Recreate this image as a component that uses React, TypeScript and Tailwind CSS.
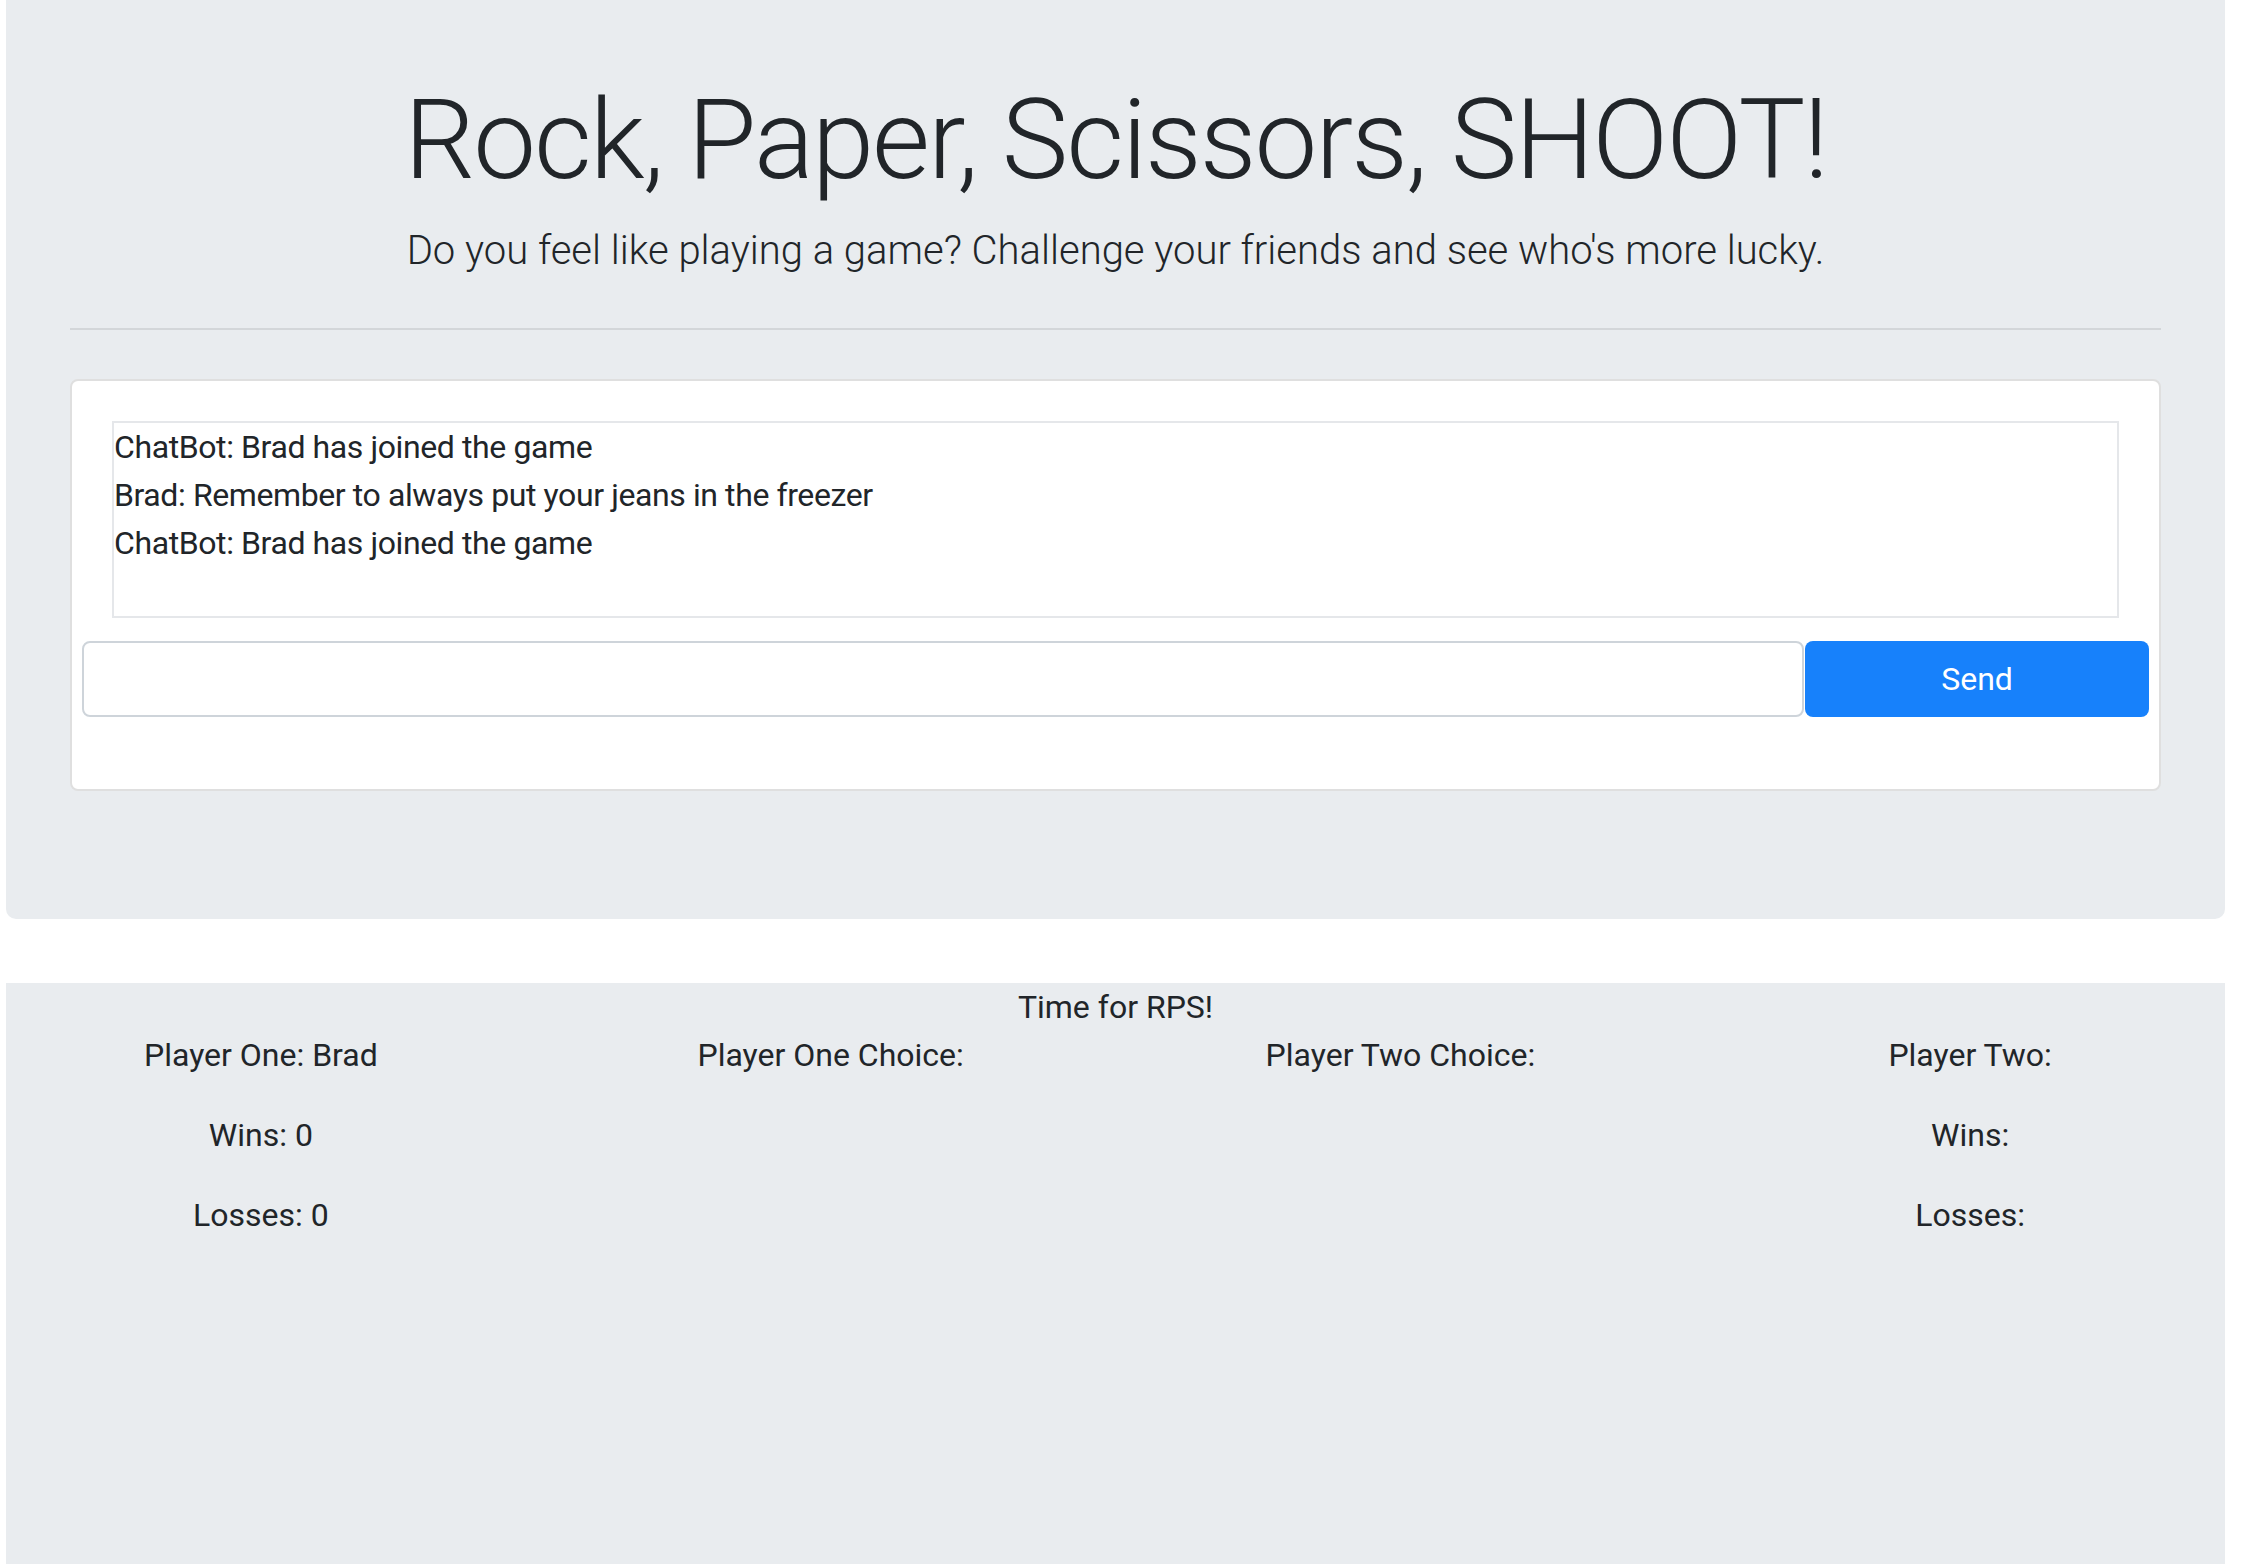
import { useState } from "react";

const messages = [
  "ChatBot: Brad has joined the game",
  "Brad: Remember to always put your jeans in the freezer",
  "ChatBot: Brad has joined the game",
];

function Column({ lines }: { lines: string[] }) {
  return (
    <div className="flex flex-col items-center">
      {lines.map((line, i) => (
        <p key={i} className="mb-[32px] leading-[48px]">
          {line}
        </p>
      ))}
    </div>
  );
}

export default function App() {
  const [text, setText] = useState("");

  return (
    <div className="flex flex-col h-screen overflow-hidden bg-white font-['Roboto',sans-serif] text-[32px] text-[#212529]">
      <div className="ml-[6px] w-[2219px] shrink-0 bg-[#e9ecef] rounded-b-[10px] px-[64px] pt-[73px] pb-[128px] mb-[64px]">
        <h1 className="text-center text-[112px] font-light leading-[1.2] tracking-[-2px] mb-[14px]">
          Rock, Paper, Scissors, SHOOT!
        </h1>
        <p className="text-center text-[40px] font-light leading-[1.5]">
          Do you feel like playing a game? Challenge your friends and see who's more lucky.
        </p>
        <hr className="mt-[47px] mb-[49px] border-0 border-t-2 border-[#d3d6d9]" />

        <div className="bg-white border-2 border-[#dfdfdf] rounded-[8px] px-[40px] pt-[40px] pb-[72px]">
          <div className="h-[197px] border-2 border-[#e5e7ea] leading-[48px] tracking-[-0.4px]">
            {messages.map((m, i) => (
              <div key={i}>{m}</div>
            ))}
          </div>
          <form
            onSubmit={(e) => {
              e.preventDefault();
              setText("");
            }}
            className="flex -mx-[30px] mt-[23px]"
          >
            <input
              type="text"
              value={text}
              onChange={(e) => setText(e.target.value)}
              className="flex-1 h-[76px] px-[24px] bg-white border-2 border-[#ced4da] rounded-[8px] text-[32px] focus:outline-none"
            />
            <button
              type="submit"
              className="w-[344px] h-[76px] ml-[1px] bg-[#1781fb] rounded-[8px] text-white text-[32px] cursor-pointer"
            >
              Send
            </button>
          </form>
        </div>
      </div>

      <div className="ml-[6px] w-[2219px] flex-1 bg-[#e9ecef]">
        <div className="text-center leading-[48px]">Time for RPS!</div>
        <div className="grid grid-cols-4 -mx-[30px]">
          <Column lines={["Player One: Brad", "Wins: 0", "Losses: 0"]} />
          <Column lines={["Player One Choice:"]} />
          <Column lines={["Player Two Choice:"]} />
          <Column lines={["Player Two:", "Wins:", "Losses:"]} />
        </div>
      </div>
    </div>
  );
}
